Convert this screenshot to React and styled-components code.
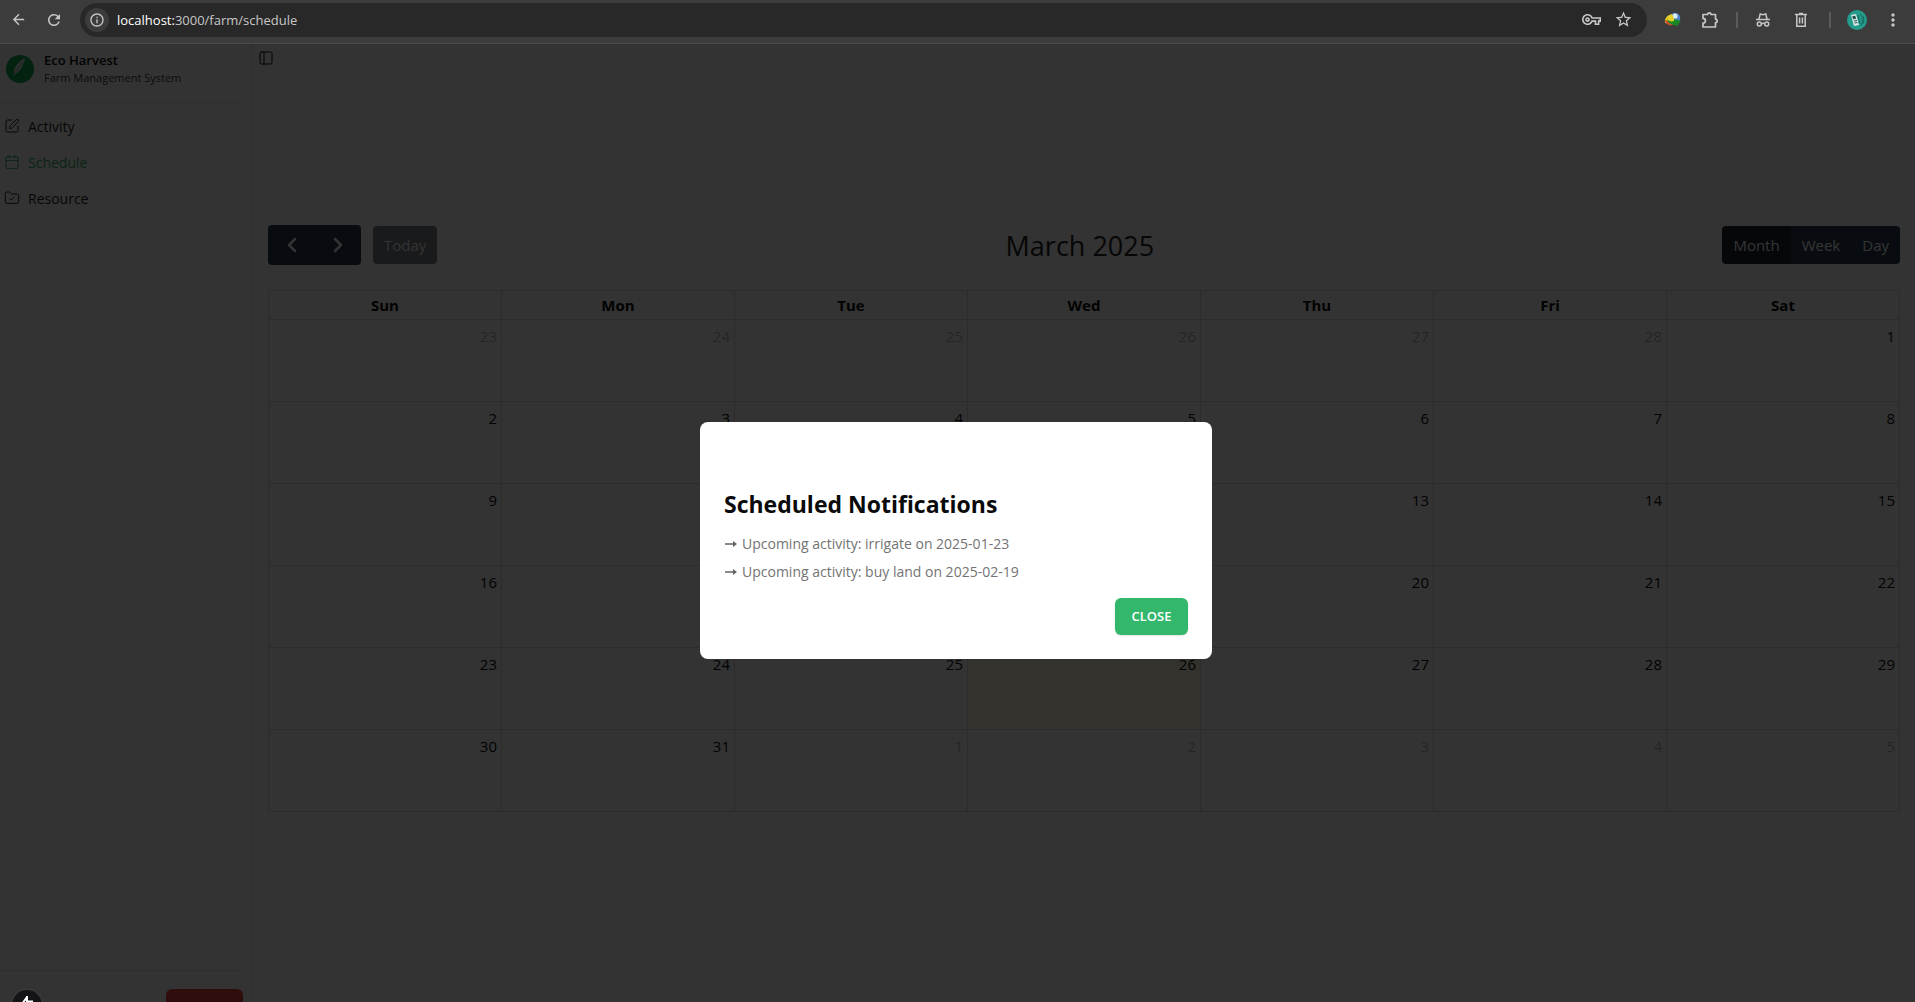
import React from "react";
import styled, { createGlobalStyle, css } from "styled-components";
import { SquarePen, Calendar, FolderCheck, PanelLeft, ChevronLeft, ChevronRight } from "lucide-react";
import {
  MdArrowBack,
  MdRefresh,
  MdInfoOutline,
  MdStarOutline,
  MdOutlineVpnKey,
  MdMoreVert,
} from "react-icons/md";

const GlobalStyle = createGlobalStyle`
  *, *::before, *::after { box-sizing: border-box; }
  body {
    margin: 0;
    background: #fff;
    color: #0a0a0a;
    font-family: "Segoe UI", "Open Sans", "Noto Sans", sans-serif;
    font-size: 14px;
  }
  button, input { font: inherit; color: inherit; margin: 0; }
`;

const Window = styled.div`
  height: 100vh;
  display: flex;
  flex-direction: column;
  overflow: hidden;
`;

/* ---------- browser bar ---------- */

const BrowserBar = styled.header`
  flex: none;
  height: 44px;
  display: flex;
  align-items: center;
  padding: 0 4px 4px;
  background: #3c3c3c;
  border-bottom: 1px solid #4c4c4c;
  color: #c7c7c7;
`;

const BarButton = styled.button`
  width: ${(p) => p.$width || 36}px;
  height: 32px;
  padding: 0;
  border: 0;
  background: none;
  display: inline-flex;
  align-items: center;
  justify-content: center;
`;

const AddressBar = styled.div`
  flex: 1;
  height: 34px;
  margin: 0 8px 0 4px;
  padding: 0 8px 0 5px;
  display: flex;
  align-items: center;
  border-radius: 17px;
  background: #282828;
`;

const SiteInfo = styled.button`
  width: 24px;
  height: 24px;
  padding: 0;
  border: 0;
  border-radius: 50%;
  background: #3c3c3c;
  display: inline-flex;
  align-items: center;
  justify-content: center;
`;

const Address = styled.div`
  flex: 1;
  padding-left: 8px;
  font-size: 13px;
  color: #c7c7c7;
  b { font-weight: 400; color: #fff; }
`;

const BarDivider = styled.span`
  width: 2px;
  height: 16px;
  margin: 0 ${(p) => p.$gap}px;
  background: #5a5a5a;
`;

/* ---------- page ---------- */

const Page = styled.div`
  position: relative;
  flex: 1;
  min-height: 0;
  display: flex;
  overflow: hidden;
`;

const Sidebar = styled.aside`
  flex: none;
  width: 252px;
  display: flex;
  flex-direction: column;
  border-right: 1px solid #e5e5e5;
`;

const Brand = styled.div`
  display: flex;
  align-items: center;
  gap: 10px;
  height: 59px;
  margin-right: 8px;
  padding: 0 0 8px 6px;
  border-bottom: 1px solid #e5e5e5;
`;

const BrandText = styled.div`
  display: flex;
  flex-direction: column;
`;

const BrandName = styled.span`
  font-size: 13px;
  line-height: 18px;
  font-weight: 600;
`;

const BrandTag = styled.span`
  font-size: 11px;
  line-height: 18px;
  color: #404040;
`;

const Menu = styled.nav`
  flex: 1;
  display: flex;
  flex-direction: column;
  padding-top: 5px;
`;

const MenuLink = styled.a`
  height: 36px;
  padding-left: 4px;
  display: flex;
  align-items: center;
  gap: 8px;
  font-size: 14px;
  text-decoration: none;
  color: ${(p) => (p.$active ? "#32b76c" : "#262626")};
`;

const SidebarFooter = styled.div`
  flex: none;
  height: 32px;
  margin-right: 8px;
  padding-top: 18px;
  display: flex;
  justify-content: flex-end;
  align-items: flex-start;
  border-top: 1px solid #e5e5e5;
`;

const DangerButton = styled.button`
  flex: none;
  width: 77px;
  height: 36px;
  border: 0;
  border-radius: 6px;
  background: #ef4444;
`;

const Main = styled.main`
  flex: 1;
  min-width: 0;
  padding: 0 15px 0 16px;
`;

const TopRow = styled.div`
  height: 181px;
  padding-top: 6px;
  margin-left: -10px;
`;

const PlainButton = styled.button`
  padding: 0;
  border: 0;
  background: none;
  display: block;
`;

/* ---------- calendar ---------- */

const Toolbar = styled.div`
  height: 40px;
  margin-bottom: 25px;
  display: flex;
  align-items: center;
  justify-content: space-between;
`;

const ToolbarSide = styled.div`
  display: flex;
  align-items: center;
  gap: 12px;
`;

const ButtonGroup = styled.div`
  display: flex;
  border-radius: 4px;
  overflow: hidden;
`;

const CalButton = styled.button`
  height: 38px;
  padding: 0 11px;
  border: 0;
  font-size: 15px;
  color: #fff;
  background: ${(p) => (p.$active ? "#1a252f" : "#2c3e50")};
  ${(p) => p.$nav && css`
    width: ${p.$nav}px;
    height: 40px;
    padding: 0;
    display: inline-flex;
    align-items: center;
    justify-content: center;
  `}
  &:disabled { opacity: 0.65; border-radius: 4px; background: #373d44; }
`;

const MonthTitle = styled.h2`
  margin: 0;
  font-size: 27px;
  font-weight: 400;
  color: #262626;
`;

const MonthTable = styled.table`
  width: 100%;
  table-layout: fixed;
  border-collapse: collapse;
  th, td { border: 1px solid #ddd; padding: 0 4px; }
  th { height: 29px; font-size: 15px; line-height: 24px; font-weight: 700; }
`;

const Day = styled.td`
  height: 82px;
  vertical-align: top;
  text-align: right;
  font-size: 15px;
  line-height: 32px;
  background: ${(p) => (p.$today ? "rgba(255, 220, 40, 0.15)" : "transparent")};
  span { opacity: ${(p) => (p.$other ? 0.3 : 1)}; }
`;

/* ---------- overlays ---------- */

const Backdrop = styled.div`
  position: absolute;
  inset: 0;
  display: flex;
  align-items: center;
  justify-content: center;
  padding-top: 34px;
  background: rgba(0, 0, 0, 0.8);
`;

const Dialog = styled.section`
  flex: none;
  width: 512px;
  margin-right: 3px;
  padding: 64px 24px 24px;
  display: flex;
  flex-direction: column;
  border-radius: 8px;
  background: #fff;
  font-size: 14px;
`;

const DialogTitle = styled.h2`
  margin: 0 0 8px;
  font-size: 23px;
  line-height: 36px;
  font-weight: 700;
`;

const Notices = styled.ul`
  margin: 0 0 12px;
  padding: 0;
  list-style: none;
  line-height: 28px;
  color: #737373;
  li { display: flex; align-items: center; gap: 4px; }
`;

const CloseButton = styled.button`
  align-self: flex-end;
  width: 73px;
  height: 37px;
  padding: 0;
  border: 0;
  border-radius: 6px;
  background: #32b76c;
  color: #fff;
  font-size: 13px;
  font-weight: 600;
  box-shadow: 0 1px 2px rgba(0, 0, 0, 0.12);
`;

const DevBadge = styled.div`
  position: absolute;
  left: 12px;
  bottom: -18px;
  width: 30px;
  height: 30px;
  border-radius: 50%;
  background: #141416;
  box-shadow: 0 0 0 1px #3e3e3e;
  display: flex;
  justify-content: center;
  padding-top: 6px;
`;

const LeafLogo = () => (
  <svg width="28" height="28" viewBox="0 0 28 28" aria-hidden="true">
    <circle cx="14" cy="14" r="14" fill="#13aa4b" />
    <path d="M19 3C12 7 7 13 8 18l-1 4 2-3c5-2 9-9 10-16z" fill="#d6e4da" />
    <path d="M17 7L9 18" stroke="#8fbf9f" strokeWidth="1" />
  </svg>
);

const Arrow = () => (
  <svg width="14" height="14" viewBox="0 0 14 14" aria-hidden="true">
    <path d="M1 6.2h8V4l4 3-4 3V7.8H1z" fill="#636363" />
  </svg>
);

const GlobeArrow = () => (
  <svg width="18" height="16" viewBox="0 0 18 16" aria-hidden="true">
    <circle cx="11" cy="6" r="5.2" fill="#4f86c8" />
    <circle cx="11" cy="4" r="2.6" fill="#d9ecf5" />
    <path d="M8 2C3 3 0 7 1 11l6 1 4-3z" fill="#e3cf28" />
    <path d="M1 8c0 4 4 6 8 5L4 9z" fill="#c8502c" />
    <path d="M3 7c2 2 4 3 7 2V7l7 2-5 6v-2c-4 0-8-2-9-6z" fill="#178a25" />
  </svg>
);

const Puzzle = () => (
  <svg width="18" height="18" viewBox="0 0 18 18" fill="none" stroke="#c7c7c7" strokeWidth="1.7" strokeLinejoin="round" aria-hidden="true">
    <path d="M2 3.5h4.6a1.7 1.7 0 0 1 3.4 0h4.5v4.6a1.7 1.7 0 0 1 0 3.4V16H2v-3.8a2.4 2.4 0 0 0 0-4.8z" />
  </svg>
);

const Incognito = () => (
  <svg width="16" height="16" viewBox="0 0 16 16" fill="none" stroke="#c7c7c7" strokeWidth="1.5" aria-hidden="true">
    <path d="M1 7.5h14M4 7l1.2-5 2.8.8 2.8-.8L12 7" />
    <circle cx="4.3" cy="12" r="2" />
    <circle cx="11.7" cy="12" r="2" />
    <path d="M6.3 11.8q1.7-1 3.4 0" />
  </svg>
);

const Trash = () => (
  <svg width="14" height="16" viewBox="0 0 14 16" fill="none" stroke="#c7c7c7" strokeWidth="1.5" aria-hidden="true">
    <path d="M1 2.5h12M5 1.5h4M2.8 3v11.2h8.4V3M5.6 5.5v6M8.4 5.5v6" />
  </svg>
);

const Avatar = () => (
  <svg width="20" height="20" viewBox="0 0 20 20" aria-hidden="true">
    <circle cx="10" cy="10" r="10" fill="#249c8c" />
    <path d="M4 5l5-1 3 11-5 1z" fill="#d6e8e5" />
    <path d="M5.3 6.3l3-.6.8 3-3 .6z" fill="#23504c" />
    <path d="M7 11l3-.5M7.6 13l3-.5" stroke="#23504c" />
    <path d="M13 4c3 3 3 8 1 12M16 6c1 3 1 6 0 8M11 5l2 9" stroke="#16695f" fill="none" />
  </svg>
);

const Bolt = () => (
  <svg width="16" height="18" viewBox="0 0 16 18" aria-hidden="true">
    <path d="M8 0v12M8 1L3 8M8 5.5h6" stroke="#fff" strokeWidth="2" fill="none" />
  </svg>
);

const weekdays = ["Sun", "Mon", "Tue", "Wed", "Thu", "Fri", "Sat"];

const weeks = Array.from({ length: 6 }, (_, week) =>
  weekdays.map((_, day) => {
    const date = new Date(2025, 1, 23 + week * 7 + day);
    return {
      key: `${date.getMonth()}-${date.getDate()}`,
      number: date.getDate(),
      other: date.getMonth() !== 2,
      today: date.getMonth() === 2 && date.getDate() === 26,
    };
  })
);

const menu = [
  { label: "Activity", Icon: SquarePen },
  { label: "Schedule", Icon: Calendar, active: true },
  { label: "Resource", Icon: FolderCheck },
];

const notices = [
  "Upcoming activity: irrigate on 2025-01-23",
  "Upcoming activity: buy land on 2025-02-19",
];

export default function App() {
  return (
    <Window>
      <GlobalStyle />
      <BrowserBar>
        <BarButton $width={28} aria-label="Back"><MdArrowBack size={17} /></BarButton>
        <BarButton $width={44} aria-label="Reload"><MdRefresh size={18} /></BarButton>
        <AddressBar>
          <SiteInfo aria-label="Site information"><MdInfoOutline size={16} /></SiteInfo>
          <Address><b>localhost:</b>3000/farm/schedule</Address>
          <BarButton $width={32} aria-label="Passwords"><MdOutlineVpnKey size={19} /></BarButton>
          <BarButton $width={32} aria-label="Bookmark"><MdStarOutline size={19} /></BarButton>
        </AddressBar>
        <BarButton aria-label="Download manager"><GlobeArrow /></BarButton>
        <BarButton $width={38} aria-label="Extensions"><Puzzle /></BarButton>
        <BarDivider $gap={7} />
        <BarButton aria-label="Private mode"><Incognito /></BarButton>
        <BarButton $width={40} aria-label="Delete"><Trash /></BarButton>
        <BarDivider $gap={8} />
        <BarButton aria-label="Profile"><Avatar /></BarButton>
        <BarButton aria-label="More"><MdMoreVert size={20} /></BarButton>
      </BrowserBar>

      <Page>
        <Sidebar>
          <Brand>
            <LeafLogo />
            <BrandText>
              <BrandName>Eco Harvest</BrandName>
              <BrandTag>Farm Management System</BrandTag>
            </BrandText>
          </Brand>
          <Menu>
            {menu.map(({ label, Icon, active }) => (
              <MenuLink key={label} href="#" $active={active}>
                <Icon size={16} strokeWidth={1.5} />
                {label}
              </MenuLink>
            ))}
          </Menu>
          <SidebarFooter>
            <DangerButton aria-label="Log out" />
          </SidebarFooter>
        </Sidebar>

        <Main>
          <TopRow>
            <PlainButton aria-label="Toggle sidebar"><PanelLeft size={16} strokeWidth={1.5} /></PlainButton>
          </TopRow>
          <Toolbar>
            <ToolbarSide>
              <ButtonGroup>
                <CalButton $nav={47} aria-label="Previous month"><ChevronLeft size={24} strokeWidth={2.5} /></CalButton>
                <CalButton $nav={46} aria-label="Next month"><ChevronRight size={24} strokeWidth={2.5} /></CalButton>
              </ButtonGroup>
              <CalButton disabled>Today</CalButton>
            </ToolbarSide>
            <MonthTitle>March 2025</MonthTitle>
            <ButtonGroup>
              <CalButton $active>Month</CalButton>
              <CalButton>Week</CalButton>
              <CalButton>Day</CalButton>
            </ButtonGroup>
          </Toolbar>
          <MonthTable>
            <thead>
              <tr>{weekdays.map((d) => <th key={d} scope="col">{d}</th>)}</tr>
            </thead>
            <tbody>
              {weeks.map((week) => (
                <tr key={week[0].key}>
                  {week.map((d) => (
                    <Day key={d.key} $other={d.other} $today={d.today}><span>{d.number}</span></Day>
                  ))}
                </tr>
              ))}
            </tbody>
          </MonthTable>
        </Main>

        <Backdrop>
          <Dialog role="dialog" aria-modal="true" aria-labelledby="notifications-title">
            <DialogTitle id="notifications-title">Scheduled Notifications</DialogTitle>
            <Notices>
              {notices.map((text) => <li key={text}><Arrow />{text}</li>)}
            </Notices>
            <CloseButton>CLOSE</CloseButton>
          </Dialog>
        </Backdrop>
        <DevBadge><Bolt /></DevBadge>
      </Page>
    </Window>
  );
}
